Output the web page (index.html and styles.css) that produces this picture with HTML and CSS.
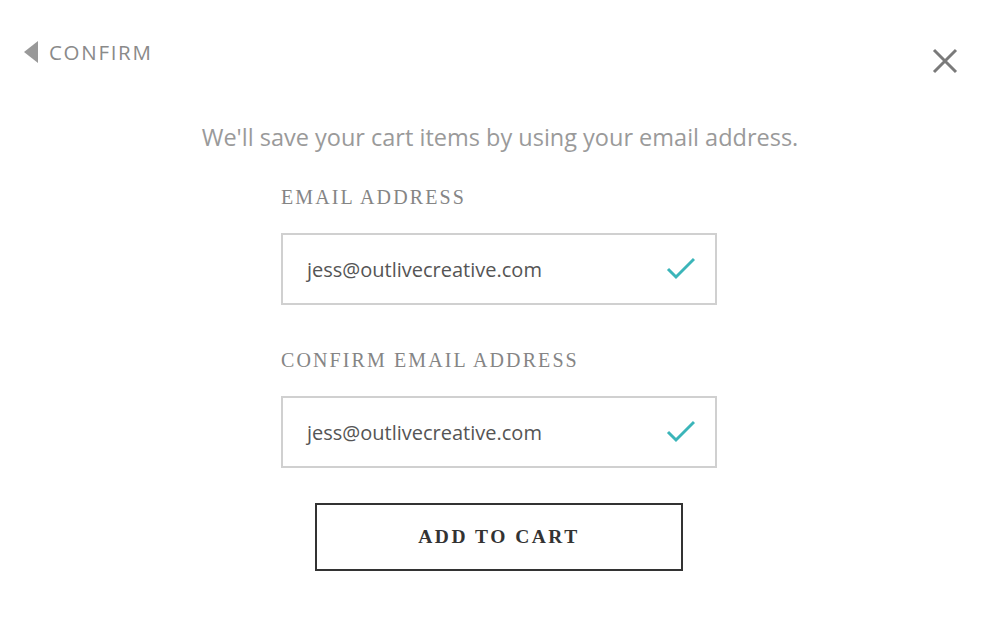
FILE: index.html
```html
<!DOCTYPE html>
<html>
<head>
<meta charset="utf-8">
<link rel="stylesheet" href="styles.css">
</head>
<body>
<div class="page">
  <header class="top">
    <a class="back"><span class="tri"></span><span class="back-text">CONFIRM</span></a>
    <button class="close" aria-label="Close">
      <svg width="26" height="26" viewBox="0 0 26 26"><path d="M2 2 L24 24 M24 2 L2 24" stroke="#7a7a7a" stroke-width="3" fill="none"/></svg>
    </button>
  </header>
  <p class="intro">We'll save your cart items by using your email address.</p>
  <form class="form">
    <label class="label">EMAIL ADDRESS</label>
    <div class="field">
      <span class="value">jess@outlivecreative.com</span>
      <svg class="check" width="30" height="24" viewBox="0 0 30 24"><path d="M3 13 L11 21 L29 3" stroke="#3bb5b9" stroke-width="3" fill="none"/></svg>
    </div>
    <label class="label second">CONFIRM EMAIL ADDRESS</label>
    <div class="field">
      <span class="value">jess@outlivecreative.com</span>
      <svg class="check" width="30" height="24" viewBox="0 0 30 24"><path d="M3 13 L11 21 L29 3" stroke="#3bb5b9" stroke-width="3" fill="none"/></svg>
    </div>
    <div class="actions"><button type="button" class="btn">ADD TO CART</button></div>
  </form>
</div>
</body>
</html>
```
FILE: styles.css
```css
html, body { margin: 0; padding: 0; background: #fff; }
body { width: 1000px; height: 620px; overflow: hidden; font-family: "Open Sans", sans-serif; }
.page { padding: 38px 42px 0 24px; }
.top { display: flex; justify-content: space-between; align-items: flex-start; }
.back { display: flex; align-items: center; gap: 11px; color: #8a8a8a; }
.tri { width: 0; height: 0; border-top: 11px solid transparent; border-bottom: 11px solid transparent; border-right: 14px solid #999; }
.back-text { font-size: 20.5px; letter-spacing: 1.7px; line-height: 28px; }
.close { background: none; border: 0; padding: 0; margin-top: 10px; width: 26px; height: 26px; display: block; }
.close svg { display: block; }
.intro { margin: 47px 0 0 18px; text-align: center; font-size: 23.5px; color: #9a9a9a; line-height: 32px; }
.form { width: 436px; margin: 32px 0 0 257px; display: flex; flex-direction: column; }
.label { font-family: "Liberation Serif", serif; font-size: 20px; letter-spacing: 2.1px; color: #858585; line-height: 24px; }
.label.second { margin-top: 43px; }
.field { margin-top: 24px; height: 68px; border: 2px solid #d0d0d0; display: flex; align-items: center; justify-content: space-between; padding: 0 20px 0 24px; }
.value { font-size: 20px; color: #555; }
.check { display: block; margin-top: -2px; }
.actions { display: flex; justify-content: center; margin-top: 35px; }
.btn { width: 368px; height: 68px; background: #fff; border: 2px solid #333; font-family: "Liberation Serif", serif; font-weight: bold; font-size: 19.5px; letter-spacing: 2.5px; color: #333; }
```
